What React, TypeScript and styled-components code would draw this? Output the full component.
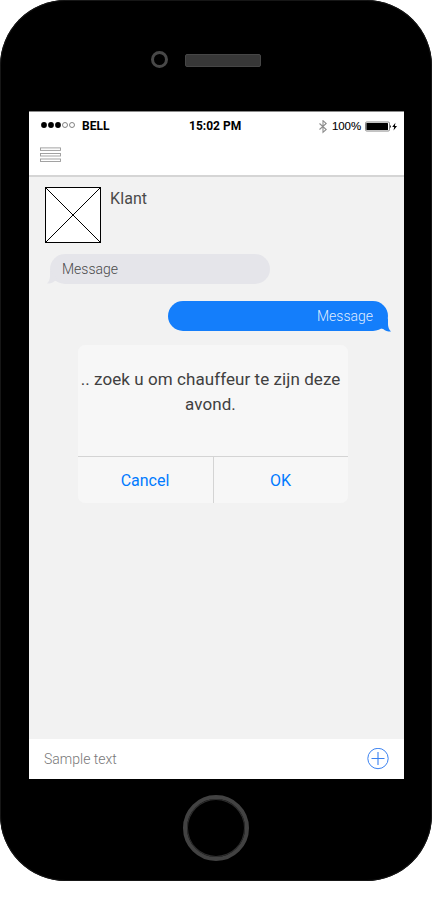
import React from 'react';
import styled, { createGlobalStyle } from 'styled-components';

const GlobalStyle = createGlobalStyle`
  *, *::before, *::after { box-sizing: border-box; }
  body { margin: 0; background: #fff; font-family: Roboto, 'Liberation Sans', sans-serif; }
  svg { display: block; flex: none; }
`;

const Phone = styled.main`
  display: flex;
  flex-direction: column;
  width: 432px;
  height: 881px;
  padding: 0 28px 0 29px;
  background: #000;
  border-radius: 66px;
  box-shadow: inset 0 0 0 1px #161616;
`;

const Earpiece = styled.div`
  display: flex;
  align-items: center;
  gap: 16.5px;
  height: 111px;
  padding: 10px 0 0 122px;
`;

const Camera = styled.div`
  width: 17px;
  height: 17px;
  margin-top: -2px;
  border: 3px solid #484848;
  border-radius: 50%;
`;

const Speaker = styled.div`
  width: 76.5px;
  height: 13px;
  background: #373737;
  border: 1px solid #464646;
  border-radius: 2px;
`;

const Screen = styled.section`
  display: flex;
  flex-direction: column;
  height: 668px;
  background: #f2f2f2;
  border-top: 1px solid #8a8a8a;
`;

const Header = styled.header`
  height: 65px;
  background: #fff;
  border-bottom: 2px solid #d5d5d5;
`;

const StatusBar = styled.div`
  display: grid;
  grid-template-columns: 160px 1fr 115px;
  height: 28px;
  line-height: 28px;
  font-size: 12px;
  font-weight: 700;
  color: #000;
`;

const Carrier = styled.div`
  display: flex;
  align-items: flex-start;
  gap: 7px;
  padding-left: 12px;

  svg { margin-top: 9px; }
`;

const Clock = styled.time`
  white-space: nowrap;
`;

const Indicators = styled.div`
  display: flex;
  align-items: center;
  padding-left: 30px;
`;

const Percent = styled.span`
  width: 33px;
  margin-left: 5px;
  font: 400 11.5px/29px 'Liberation Sans', Arial, sans-serif;
  letter-spacing: -0.1px;
  -webkit-text-stroke: 0.1px #000;
`;

const MenuButton = styled.button`
  display: block;
  margin: 7px 0 0 11px;
  padding: 0;
  border: 0;
  background: none;
`;

const Conversation = styled.div`
  display: flex;
  flex-direction: column;
  flex: 1;
  padding: 10px 16px 0;
`;

const Contact = styled.div`
  display: flex;
  gap: 9px;
  height: 56px;
`;

const ContactName = styled.h1`
  margin: 0;
  font-size: 16px;
  line-height: 23px;
  font-weight: 400;
  letter-spacing: 0.1px;
  color: #4a4a4a;
`;

const Bubble = styled.div<{ $outgoing?: boolean }>`
  position: relative;
  align-self: ${p => (p.$outgoing ? 'flex-end' : 'flex-start')};
  width: 220px;
  height: 30px;
  margin: ${p => (p.$outgoing ? '17px 0 0' : '11px 0 0 5px')};
  padding: ${p => (p.$outgoing ? '0 15px' : '0 12px')};
  border-radius: 15px;
  background: ${p => (p.$outgoing ? '#147efb' : '#e5e5ea')};
  color: ${p => (p.$outgoing ? 'rgba(255, 255, 255, 0.88)' : '#4a4a4a')};
  font-size: 14px;
  font-weight: 300;
  line-height: 30px;
  text-align: ${p => (p.$outgoing ? 'right' : 'left')};
`;

const Tail = styled.svg<{ $outgoing?: boolean }>`
  position: absolute;
  bottom: -1px;
  ${p => (p.$outgoing ? 'right: -3px;' : 'left: -3px; bottom: 0; transform: scaleX(-1);')}
`;

const Dialog = styled.section`
  display: flex;
  flex-direction: column;
  width: 270px;
  height: 158px;
  margin: 14px 0 0 33px;
  border-radius: 7px;
  background: #f7f7f7;
`;

const DialogText = styled.p`
  flex: 1;
  margin: 0;
  padding: 22px 5px 0 0;
  font-size: 17px;
  line-height: 25px;
  letter-spacing: 0.07px;
  text-align: center;
  white-space: pre;
  color: #404040;
`;

const DialogActions = styled.div`
  display: grid;
  grid-template-columns: 136px 1fr;
  height: 47px;
  border-top: 1px solid #d4d4d4;
`;

const DialogButton = styled.button`
  padding: 1px 1px 0 0;
  border: 0;
  background: none;
  font: 400 16px/45px Roboto, sans-serif;
  color: #007aff;
  & + & { padding: 1px 1px 0 0; }
  &:first-child { border-right: 1px solid #d4d4d4; }
`;

const Composer = styled.footer`
  display: flex;
  align-items: center;
  justify-content: space-between;
  height: 40px;
  padding: 0 15px;
  background: #fff;
  color: #777;
  font-size: 14px;
  font-weight: 300;
`;

const HomeArea = styled.div`
  display: flex;
  padding: 16px 0 0 154px;
`;

const HomeButton = styled.div`
  width: 66px;
  height: 66px;
  border: 4px solid #424242;
  box-shadow: inset 0 0 0 1px #2e2e2e;
  border-radius: 50%;
`;

const SignalDots = () => (
  <svg width="34" height="8" viewBox="0 0 34 8">
    {[3, 10, 17].map(x => <circle key={x} cx={x} cy="4" r="2.9" fill="#000" />)}
    {[24, 31].map(x => <circle key={x} cx={x} cy="4" r="2.5" fill="none" stroke="#666" strokeWidth="0.8" />)}
  </svg>
);

const Bluetooth = () => (
  <svg width="8" height="14" viewBox="0 0 8 14" fill="none" stroke="#8c8c8c" strokeWidth="1.1">
    <path d="M0.5 3.5 7.2 9.5 4 12.3V.7L7.2 3.5 .5 9.5" />
  </svg>
);

const Battery = () => (
  <svg width="34" height="12" viewBox="0 0 34 12">
    <rect x="0.5" y="1" width="24" height="9" rx="1.2" fill="#fff" stroke="#888" />
    <rect x="1.4" y="1.9" width="21.6" height="7.2" rx=".5" fill="#000" />
    <path d="M25 4q2 1.5 0 3z" fill="#222" />
    <path d="M30.4 1.7 27.2 6h2l-.7 3.4 3.5-4.5h-2.1z" fill="#000" />
  </svg>
);

const MenuIcon = () => (
  <svg width="22" height="16" viewBox="0 0 22 16" fill="none" stroke="#999" strokeWidth="0.9">
    {[0.9, 6.5, 12].map(y => <rect key={y} x="0.5" y={y} width="20" height="2.5" />)}
  </svg>
);

const Placeholder = () => (
  <svg width="56" height="56" viewBox="0 0 56 56" stroke="#000">
    <rect x=".5" y=".5" width="55" height="55" fill="#fff" />
    <path d="M.5.5l55 55M55.5.5l-55 55" />
  </svg>
);

const BubbleTail = ({ outgoing = false }: { outgoing?: boolean }) => (
  <Tail $outgoing={outgoing} width="12" height="14" viewBox="0 0 12 14" fill={outgoing ? '#147efb' : '#e5e5ea'}>
    <path d="M9 0v6.2q0 4.5 3 7.3-5.2 0-7.4-2.3L1 10z" />
  </Tail>
);

const PlusIcon = () => (
  <svg width="22" height="22" viewBox="0 0 22 22" fill="none" stroke="#3b82f0">
    <circle cx="11" cy="10.5" r="10.2" />
    <path d="M11 4v13M4.5 10.5h13" strokeWidth="1.1" />
  </svg>
);

export default function App() {
  return (
    <>
      <GlobalStyle />
      <Phone>
        <Earpiece><Camera /><Speaker /></Earpiece>
        <Screen>
          <Header>
            <StatusBar>
              <Carrier><SignalDots />BELL</Carrier>
              <Clock>15:02 PM</Clock>
              <Indicators><Bluetooth /><Percent>100%</Percent><Battery /></Indicators>
            </StatusBar>
            <MenuButton aria-label="Menu"><MenuIcon /></MenuButton>
          </Header>
          <Conversation>
            <Contact><Placeholder /><ContactName>Klant</ContactName></Contact>
            <Bubble>Message<BubbleTail /></Bubble>
            <Bubble $outgoing>Message<BubbleTail outgoing /></Bubble>
            <Dialog role="dialog">
              <DialogText>{'.. zoek u om chauffeur te zijn deze\navond.'}</DialogText>
              <DialogActions>
                <DialogButton>Cancel</DialogButton>
                <DialogButton>OK</DialogButton>
              </DialogActions>
            </Dialog>
          </Conversation>
          <Composer><span>Sample text</span><PlusIcon /></Composer>
        </Screen>
        <HomeArea><HomeButton /></HomeArea>
      </Phone>
    </>
  );
}
